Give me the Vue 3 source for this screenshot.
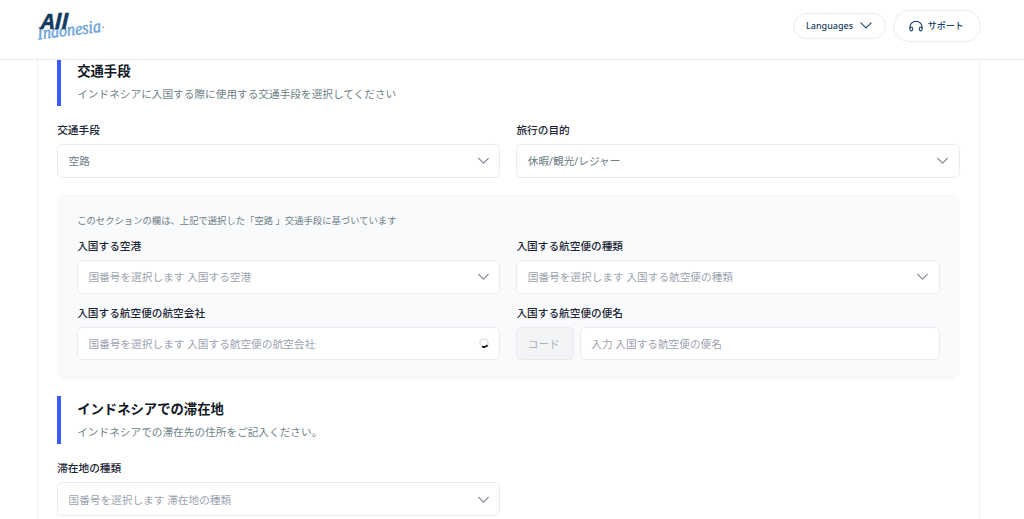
<template>
  <div class="page">
    <header class="header">
      <svg class="logo" width="72" height="36" viewBox="0 0 72 36">
        <g transform="rotate(-7 1 31)">
          <text class="logo-script" x="1" y="31.5" textLength="64" lengthAdjust="spacingAndGlyphs">Indonesia</text>
        </g>
        <circle cx="66.3" cy="19.3" r="0.9" fill="#9aa7b3" />
        <text class="logo-all" x="4" y="20.5" textLength="27" lengthAdjust="spacingAndGlyphs">All</text>
      </svg>
      <div class="header-actions">
        <button class="pill">
          <span>Languages</span>
          <svg width="12" height="7" viewBox="0 0 12 7"><path d="M0.6 0.6 L6 6 L11.4 0.6" /></svg>
        </button>
        <button class="pill support">
          <svg width="14" height="12" viewBox="0 0 14 12">
            <path d="M1 9 V6.9 C1 3.8 3.5 1.4 7 1.4 S13 3.8 13 6.9 V9" />
            <path d="M1 7.3 C2.6 6.8 3.7 7.4 3.7 8.8 C3.7 10.3 3 11 2.2 10.9 C1.4 10.8 1 10.2 1 9 Z" />
            <path d="M13 7.3 C11.4 6.8 10.3 7.4 10.3 8.8 C10.3 10.3 11 11 11.8 10.9 C12.6 10.8 13 10.2 13 9 Z" />
          </svg>
          <span>サポート</span>
        </button>
      </div>
    </header>

    <main class="card">
      <div class="section-head">
        <h2>交通手段</h2>
        <p>インドネシアに入国する際に使用する交通手段を選択してください</p>
      </div>
      <div class="grid">
        <div v-for="field in transportFields" :key="field.label" class="field">
          <label>{{ field.label }}</label>
          <div class="input filled">
            <span>{{ field.value }}</span>
            <svg class="chevron" width="11" height="7" viewBox="0 0 11 7"><path d="M0.4 1 L5.5 6.1 L10.6 1" /></svg>
          </div>
        </div>
      </div>

      <div class="panel">
        <p class="note">このセクションの欄は、上記で選択した「空路 」交通手段に基づいています</p>
        <div class="grid">
          <div v-for="field in arrivalFields" :key="field.label" class="field">
            <label>{{ field.label }}</label>
            <div class="input-row">
              <div v-if="field.code" class="input code">{{ field.code }}</div>
              <div class="input">
                <span>{{ field.placeholder }}</span>
                <span v-if="field.loading" class="spinner"></span>
                <svg v-else-if="!field.code" class="chevron" width="11" height="7" viewBox="0 0 11 7"><path d="M0.4 1 L5.5 6.1 L10.6 1" /></svg>
              </div>
            </div>
          </div>
        </div>
      </div>

      <div class="section-head">
        <h2>インドネシアでの滞在地</h2>
        <p>インドネシアでの滞在先の住所をご記入ください。</p>
      </div>
      <div class="grid">
        <div class="field">
          <label>滞在地の種類</label>
          <div class="input">
            <span>国番号を選択します 滞在地の種類</span>
            <svg class="chevron" width="11" height="7" viewBox="0 0 11 7"><path d="M0.4 1 L5.5 6.1 L10.6 1" /></svg>
          </div>
        </div>
      </div>
    </main>
  </div>
</template>

<script setup>
const transportFields = [
  { label: '交通手段', value: '空路' },
  { label: '旅行の目的', value: '休暇/観光/レジャー' }
]

const arrivalFields = [
  { label: '入国する空港', placeholder: '国番号を選択します 入国する空港' },
  { label: '入国する航空便の種類', placeholder: '国番号を選択します 入国する航空便の種類' },
  { label: '入国する航空便の航空会社', placeholder: '国番号を選択します 入国する航空便の航空会社', loading: true },
  { label: '入国する航空便の便名', placeholder: '入力 入国する航空便の便名', code: 'コード' }
]
</script>

<style>
body {
  margin: 0;
  overflow: hidden;
}
</style>

<style scoped>
* {
  box-sizing: border-box;
}

.page {
  height: 519px;
  overflow: hidden;
  background: #fff;
  font-family: "Noto Sans", "Noto Sans CJK JP", sans-serif;
  font-size: 10.67px;
  color: #1c2534;
}

.header {
  display: flex;
  justify-content: space-between;
  height: 60px;
  padding: 8px 43.5px 0 37px;
  border-bottom: 1px solid #e9eaf0;
}

.logo {
  overflow: visible;
}

.logo-all {
  font: italic 700 21px "Noto Sans", sans-serif;
  fill: #153a61;
  stroke: #153a61;
  stroke-width: 0.4;
}

.logo-script {
  font: italic 400 18px "Liberation Serif", serif;
  fill: #70a5d8;
  stroke: #70a5d8;
  stroke-width: 0.5;
}

.header-actions {
  display: flex;
  align-items: center;
  gap: 7px;
  height: 36px;
}

.pill {
  display: flex;
  align-items: center;
  justify-content: center;
  gap: 7px;
  width: 93px;
  height: 26px;
  padding: 0 1px 1px 0;
  border: 1px solid #ebedf0;
  border-radius: 20px;
  background: #fff;
  color: #164066;
  font-family: inherit;
  font-size: 9px;
  font-weight: 500;
}

.pill svg {
  fill: none;
  stroke: #24496c;
  stroke-width: 1.1;
}

.support {
  gap: 5px;
  width: 87.5px;
  height: 31.5px;
}

.card {
  width: 943.5px;
  height: 470px;
  margin-left: 36.7px;
  padding: 0 19.5px;
  border: solid #eff0f4;
  border-width: 0 1px;
}

.section-head {
  height: 48px;
  margin-bottom: 16px;
  padding-left: 16px;
  border-left: 4px solid #3c5af5;
}

.section-head:first-child {
  height: 46px;
}

.section-head h2 {
  margin: 0;
  padding-top: 2.5px;
  font-size: 13.33px;
  line-height: 20px;
  font-weight: 600;
  color: #101725;
}

.section-head:first-child h2 {
  padding-top: 1px;
}

.section-head p {
  margin: 5px 0 0;
  line-height: 16px;
  color: #6e7f87;
}

.grid {
  display: grid;
  grid-template-columns: 1fr 1fr;
  gap: 10.67px 16px;
}

.field label {
  display: block;
  height: 16px;
  margin-bottom: 6.2px;
  line-height: 16px;
  font-weight: 500;
}

.input {
  display: flex;
  flex: 1;
  align-items: center;
  justify-content: space-between;
  height: 33.4px;
  padding: 0 10.3px;
  border: 1px solid #e9ebf0;
  border-radius: 5.33px;
  background: #fff;
  color: #9ca3af;
}

.filled {
  color: #6b7c85;
}

.input-row {
  display: flex;
  gap: 5.5px;
}

.input-row .input {
  padding-bottom: 0.6px;
}

.code {
  flex: none;
  width: 58px;
  background: #f3f4f6;
  color: #adb2bd;
}

.chevron {
  fill: none;
  stroke: #858c99;
  stroke-width: 1.1;
}

.spinner {
  width: 10px;
  height: 10px;
  border: 2px solid #e5e7eb;
  border-bottom-color: #111;
  border-radius: 50%;
  transform: rotate(-15deg);
}

.panel {
  height: 186.7px;
  margin: 16px 0;
  padding: 20px;
  border-radius: 8px;
  background: #f9fafc;
}

.note {
  margin: 0 0 11.7px;
  line-height: 13px;
  font-size: 9.33px;
  color: #6e7f87;
}
</style>
